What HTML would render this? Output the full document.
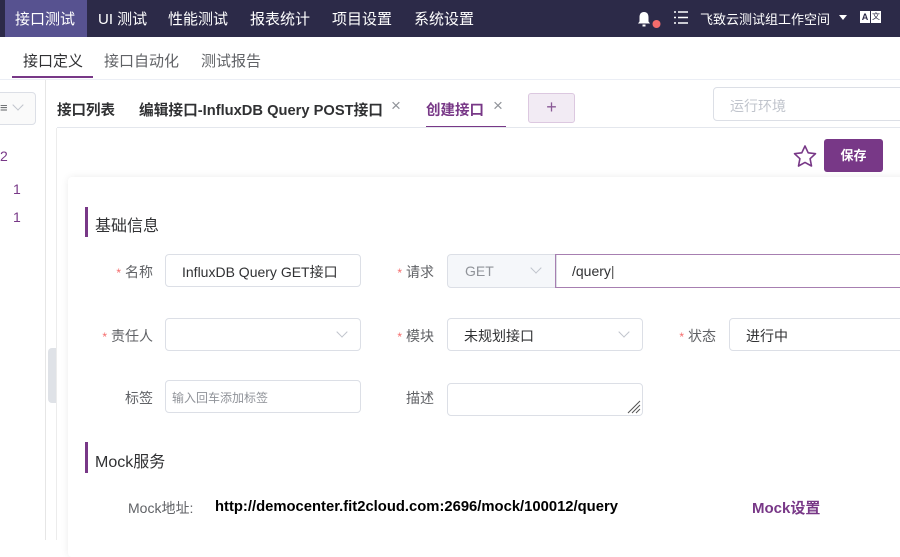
<!DOCTYPE html>
<html><head><meta charset="utf-8"><style>
*{margin:0;padding:0;box-sizing:border-box}
body{width:900px;height:540px;overflow:hidden;background:#fff;font-family:"Liberation Sans","Noto Sans CJK SC",sans-serif;position:relative;color:#303133}
.a{position:absolute;white-space:nowrap}
.top{left:0;top:0;width:900px;height:37px;background:#2c2a48}
.nav{color:#fff;font-size:15px;top:8px}
.inp{position:absolute;border:1px solid #dcdfe6;border-radius:4px;background:#fff}
.lbl{font-size:14px;color:#606266;text-align:right}
.req{color:#f56c6c;font-size:12px;margin-right:4px}
.chev{position:absolute;width:8px;height:8px;border-right:1px solid #c0c4cc;border-bottom:1px solid #c0c4cc;transform:rotate(45deg)}
</style></head><body>
<div class="a top"></div>
<div class="a" style="left:5px;top:0;width:82px;height:37px;background:#575290"></div>
<div class="a nav" style="left:15px">接口测试</div>
<div class="a nav" style="left:98px">UI 测试</div>
<div class="a nav" style="left:168px">性能测试</div>
<div class="a nav" style="left:250px">报表统计</div>
<div class="a nav" style="left:332px">项目设置</div>
<div class="a nav" style="left:414px">系统设置</div>
<svg class="a" style="left:636px;top:10px" width="28" height="19" viewBox="0 0 28 19"><path d="M8 2c-3.5 0-4.5 2.5-4.5 5.5v4L2 13.5h12l-1.5-2v-4C12.5 4.5 11.5 2 8 2z" fill="#fff"/><rect x="6.5" y="14.5" width="3" height="2" fill="#fff"/><circle cx="20.5" cy="14" r="4" fill="#f56c6c"/></svg>
<svg class="a" style="left:673px;top:10px" width="16" height="15" viewBox="0 0 16 15" stroke="#fff" stroke-width="1.6"><path d="M5 2h10M5 7.5h10M5 13h10M1 2h2M1 7.5h2M1 13h2"/></svg>
<div class="a" style="left:700px;top:9px;color:#fff;font-size:13px">飞致云测试组工作空间</div>
<div class="a" style="left:839px;top:15px;width:0;height:0;border-left:4px solid transparent;border-right:4px solid transparent;border-top:5px solid #fff"></div>
<div class="a" style="left:860px;top:11px;width:22px;height:12px;display:flex;gap:1px"><div style="width:10px;background:#fff;color:#2c2a48;font-size:9px;font-weight:bold;text-align:center;line-height:12px">A</div><div style="width:10px;background:#fff;color:#2c2a48;font-size:8px;text-align:center;line-height:12px">文</div></div>

<div class="a" style="left:23px;top:50px;font-size:15px;color:#303133">接口定义</div>
<div class="a" style="left:104px;top:50px;font-size:15px;color:#606266">接口自动化</div>
<div class="a" style="left:201px;top:50px;font-size:15px;color:#606266">测试报告</div>
<div class="a" style="left:12px;top:76px;width:81px;height:2px;background:#783887"></div>
<div class="a" style="left:0;top:79px;width:900px;height:1px;background:#ebeef5"></div>

<div class="a" style="left:45px;top:80px;width:1px;height:460px;background:#e6e6e6"></div>
<div class="inp" style="left:-10px;top:92px;width:46px;height:33px;background:#fafafa"></div>
<div class="a" style="left:0;top:100px;font-size:13px;color:#606266">≡</div>
<div class="chev" style="left:14px;top:101px"></div>
<div class="a" style="left:0;top:148px;font-size:14px;color:#783887">2</div>
<div class="a" style="left:13px;top:181px;font-size:14px;color:#783887">1</div>
<div class="a" style="left:13px;top:209px;font-size:14px;color:#783887">1</div>
<div class="a" style="left:48px;top:348px;width:9px;height:55px;background:#dfe2e7;border-radius:4px 0 0 4px"></div>
<div class="a" style="left:56px;top:128px;width:1px;height:412px;background:#ececec"></div>

<div class="a" style="left:57px;top:99px;font-size:14.5px;font-weight:bold;color:#303133">接口列表</div>
<div class="a" style="left:139px;top:99px;font-size:14.7px;font-weight:bold;color:#303133">编辑接口-InfluxDB Query POST接口</div>
<div class="a" style="left:391px;top:96px;font-size:17px;color:#909399">×</div>
<div class="a" style="left:426px;top:99px;font-size:14.5px;font-weight:bold;color:#783887">创建接口</div>
<div class="a" style="left:493px;top:96px;font-size:17px;color:#909399">×</div>
<div class="a" style="left:426px;top:126px;width:80px;height:2px;background:#783887"></div>
<div class="a" style="left:57px;top:127px;width:843px;height:1px;background:#e4e7ed"></div>
<div class="a" style="left:528px;top:93px;width:47px;height:30px;background:#f2ebf4;border:1px solid #dcc8e0;border-radius:3px;text-align:center;color:#8a5a96;font-size:18px;line-height:27px">+</div>
<div class="inp" style="left:713px;top:87px;width:200px;height:34px"></div>
<div class="a" style="left:730px;top:96px;font-size:14px;color:#c0c4cc">运行环境</div>

<svg class="a" style="left:792px;top:144px" width="26" height="25" viewBox="0 0 26 25"><path d="M13 2l3.2 6.8 7.3.9-5.4 5 1.4 7.3L13 18.4 6.5 22l1.4-7.3-5.4-5 7.3-.9z" fill="none" stroke="#783887" stroke-width="1.6" stroke-linejoin="round"/></svg>
<div class="a" style="left:824px;top:139px;width:59px;height:33px;background:#783887;border-radius:3px;color:#fff;font-size:13px;font-weight:bold;text-align:center;line-height:33px">保存</div>

<div class="a" style="left:68px;top:177px;width:840px;height:380px;background:#fff;border-radius:4px;box-shadow:0 0 8px rgba(0,0,0,.08)"></div>

<div class="a" style="left:85px;top:207px;width:3px;height:30px;background:#783887"></div>
<div class="a" style="left:95px;top:212px;font-size:16px;color:#303133">基础信息</div>

<div class="a lbl" style="left:100px;top:262px;width:53px"><span class="req">*</span>名称</div>
<div class="inp" style="left:165px;top:254px;width:196px;height:33px"></div>
<div class="a" style="left:182px;top:262px;font-size:14px;color:#303133">InfluxDB Query GET接口</div>

<div class="a lbl" style="left:380px;top:262px;width:54px"><span class="req">*</span>请求</div>
<div class="inp" style="left:447px;top:254px;width:110px;height:34px;background:#f5f7fa;border-radius:4px 0 0 4px"></div>
<div class="a" style="left:465px;top:263px;font-size:14px;color:#909399">GET</div>
<div class="chev" style="left:532px;top:264px"></div>
<div class="a" style="left:555px;top:254px;width:360px;height:34px;border:1px solid #a77fb1"></div>
<div class="a" style="left:572px;top:263px;font-size:14px;color:#303133">/query<span style="color:#555">|</span></div>

<div class="a lbl" style="left:80px;top:326px;width:73px"><span class="req">*</span>责任人</div>
<div class="inp" style="left:165px;top:318px;width:196px;height:33px"></div>
<div class="chev" style="left:338px;top:328px"></div>
<div class="a lbl" style="left:380px;top:326px;width:54px"><span class="req">*</span>模块</div>
<div class="inp" style="left:447px;top:318px;width:196px;height:33px"></div>
<div class="a" style="left:464px;top:326px;font-size:14px;color:#303133">未规划接口</div>
<div class="chev" style="left:620px;top:328px"></div>
<div class="a lbl" style="left:660px;top:326px;width:56px"><span class="req">*</span>状态</div>
<div class="inp" style="left:729px;top:318px;width:190px;height:33px"></div>
<div class="a" style="left:746px;top:326px;font-size:14px;color:#303133">进行中</div>

<div class="a lbl" style="left:100px;top:388px;width:53px">标签</div>
<div class="inp" style="left:165px;top:380px;width:196px;height:33px"></div>
<div class="a" style="left:172px;top:389px;font-size:12px;color:#909399">输入回车添加标签</div>
<div class="a lbl" style="left:380px;top:388px;width:54px">描述</div>
<div class="inp" style="left:447px;top:383px;width:196px;height:33px"></div>
<svg class="a" style="left:624px;top:397px" width="18" height="18" viewBox="0 0 18 18" stroke="#555" stroke-width="1"><path d="M4 16L16 4M8 16L16 8M12 16L16 12"/></svg>

<div class="a" style="left:85px;top:442px;width:3px;height:31px;background:#783887"></div>
<div class="a" style="left:95px;top:448px;font-size:16px;color:#303133">Mock服务</div>
<div class="a" style="left:128px;top:498px;font-size:14px;color:#606266">Mock地址:</div>
<div class="a" style="left:215px;top:499px;font-size:14.8px;font-weight:bold;color:#000">http://democenter.fit2cloud.com:2696/mock/100012/query</div>
<div class="a" style="left:752px;top:497px;font-size:15px;font-weight:bold;color:#783887">Mock设置</div>
</body></html>
